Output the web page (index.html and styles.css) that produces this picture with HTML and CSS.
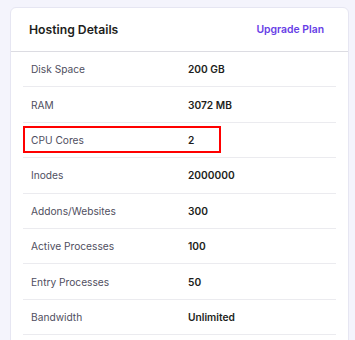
FILE: index.html
```html
<!DOCTYPE html>
<html>
<head>
<meta charset="utf-8">
<link rel="stylesheet" href="styles.css">
</head>
<body>
<div class="card">
  <div class="card-header">
    <span class="title">Hosting Details</span>
    <a class="upgrade">Upgrade Plan</a>
  </div>
  <div class="rows">
    <div class="row"><span class="label">Disk Space</span><span class="value">200 GB</span></div>
    <div class="row"><span class="label">RAM</span><span class="value">3072 MB</span></div>
    <div class="row highlighted"><span class="label">CPU Cores</span><span class="value">2</span><span class="highlight-box"></span></div>
    <div class="row"><span class="label">Inodes</span><span class="value">2000000</span></div>
    <div class="row"><span class="label">Addons/Websites</span><span class="value">300</span></div>
    <div class="row"><span class="label">Active Processes</span><span class="value">100</span></div>
    <div class="row"><span class="label">Entry Processes</span><span class="value">50</span></div>
    <div class="row"><span class="label">Bandwidth</span><span class="value">Unlimited</span></div>
  </div>
</div>
</body>
</html>
```
FILE: styles.css
```css
html, body {
  margin: 0;
  padding: 0;
}
body {
  background: #f4f4fc;
  font-family: Inter, "Noto Sans", sans-serif;
  color: #1d1e20;
  height: 340px;
  overflow: hidden;
}
.card {
  margin: 7px 0 0 10px;
  width: 339px;
  box-sizing: border-box;
  background: #ffffff;
  border: 1px solid #e6e6f2;
  border-radius: 6px;
  min-height: 400px;
}
.card-header {
  height: 44px;
  box-sizing: border-box;
  display: flex;
  align-items: center;
  justify-content: space-between;
  padding: 0 24px 0 18px;
  border-bottom: 1px solid #dcdce2;
}
.title {
  font-size: 12.2px;
  font-weight: 600;
  color: #1d1e20;
}
.upgrade {
  font-size: 10.4px;
  font-weight: 600;
  color: #673de6;
}
.rows {
  padding: 0 12px;
}
.row {
  position: relative;
  display: grid;
  grid-template-columns: 157px 1fr;
  align-items: center;
  height: 35.4px;
  box-sizing: border-box;
  padding-left: 8px;
  border-bottom: 1px solid #ebebef;
  font-size: 10.2px;
}
.label {
  color: #4f4e60;
}
.value {
  font-weight: 600;
  color: #1d1e20;
}
.highlight-box {
  position: absolute;
  left: 0;
  top: 3px;
  width: 198px;
  height: 27px;
  box-sizing: border-box;
  border: 2px solid #ff0000;
}
```
